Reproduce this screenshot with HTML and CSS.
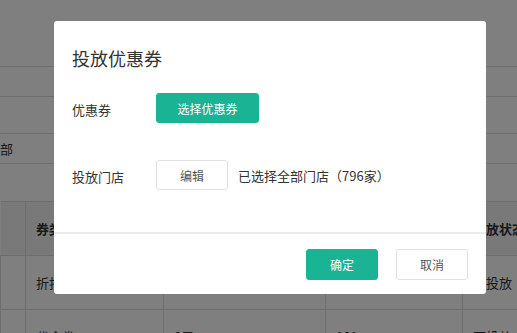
FILE: index.html
```html
<!DOCTYPE html>
<html lang="zh-CN">
<head>
    <meta charset="UTF-8">
    <meta name="viewport" content="width=device-width, initial-scale=1.0">
    <title>投放优惠券</title>
    <link rel="stylesheet" href="styles.css">
</head>
<body>

    <div class="page">
        <div class="filters">
            <div class="filter-row tall"></div>
            <div class="filter-row"></div>
            <div class="filter-row mid"></div>
            <div class="filter-row"><span class="filter-text">部</span></div>
        </div>

        <table class="list">
            <thead>
                <tr>
                    <th class="c0"></th>
                    <th class="c1">券类型</th>
                    <th class="c2">券面额</th>
                    <th class="c3">库存</th>
                    <th class="c4">投放状态</th>
                </tr>
            </thead>
            <tbody>
                <tr>
                    <td></td>
                    <td>折扣券</td>
                    <td>8折</td>
                    <td>100</td>
                    <td>可投放</td>
                </tr>
                <tr>
                    <td></td>
                    <td>代金券</td>
                    <td>0元</td>
                    <td>101</td>
                    <td>可投放</td>
                </tr>
            </tbody>
        </table>
    </div>

    <div class="mask">
        <div class="modal">
            <h2 class="modal-title">投放优惠券</h2>
            <div class="modal-body">
                <div class="form-row first">
                    <label class="form-label">优惠券</label>
                    <button class="btn btn-primary btn-wide">选择优惠券</button>
                </div>
                <div class="form-row second">
                    <label class="form-label">投放门店</label>
                    <button class="btn btn-default">编辑</button>
                    <span class="store-info">已选择全部门店（796家）</span>
                </div>
            </div>
            <div class="modal-footer">
                <button class="btn btn-primary">确定</button>
                <button class="btn btn-default">取消</button>
            </div>
        </div>
    </div>

</body>
</html>
```

FILE: styles.css
```css
* { box-sizing: border-box; }
body { margin: 0; background-color: #fff; color: #333; font-family: "Noto Sans CJK SC", "Liberation Sans", sans-serif; font-size: 13px; overflow: hidden; }

/* background page, cut by the window like the screenshot */
.page { width: 517px; height: 333px; overflow: hidden; }
.filter-row { height: 30px; border-bottom: 1px solid #dcdcdc; display: flex; align-items: center; }
.filter-row.tall { height: 67px; }
.filter-row.mid { height: 37px; }
.filter-text { font-size: 13px; }
.list { margin-top: 37px; border-collapse: collapse; width: 580px; table-layout: fixed; }
.list th, .list td { height: 54px; border: 1px solid #dcdcdc; padding: 0 10px; text-align: left; font-size: 13px; white-space: nowrap; }
.list th { background-color: #f2f2f2; font-weight: bold; }
.list .c0 { width: 25px; border-left: none; }
.list .c1 { width: 138px; }
.list .c2 { width: 162px; }
.list .c3 { width: 137px; }

/* dialog */
.mask { position: fixed; top: 0; left: 0; right: 0; bottom: 0; background-color: rgba(0, 0, 0, 0.5); }
.modal { margin: 21px 0 0 54px; width: 432px; height: 273px; background-color: #fff; border-radius: 3px; display: flex; flex-direction: column; }
.modal-title { margin: 0; padding: 24px 18px 0; font-size: 18px; font-weight: normal; line-height: 26px; color: #333; }
.modal-body { flex: 1; border-bottom: 2px solid #ebebeb; }
.form-row { display: flex; align-items: center; padding-left: 18px; }
.form-row.first { margin-top: 22px; }
.form-row.second { margin-top: 37px; }
.form-label { width: 84px; font-size: 13px; color: #333; padding-top: 3px; }
.store-info { margin-left: 10px; font-size: 13px; color: #333; }

.btn { height: 30px; width: 72px; border-radius: 3px; font-family: inherit; font-size: 12px; cursor: pointer; padding: 0; }
.btn-primary { background-color: #1ab394; border: 1px solid #1ab394; color: #fff; }
.btn-default { background-color: #fff; border: 1px solid #e0e0e0; color: #555; }
.btn-wide { width: 103px; }

.modal-footer { display: flex; justify-content: flex-end; gap: 18px; padding: 15px 18px 14px; }
.modal-footer .btn { height: 31px; }
```
